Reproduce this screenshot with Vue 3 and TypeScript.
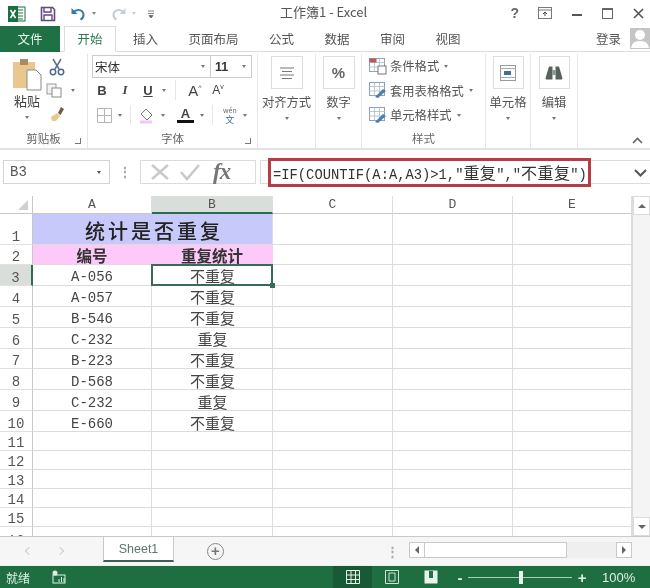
<template>
  <div class="app">
    <header class="title-bar">
      <div class="quick">
        <svg class="xl-logo" width="18" height="18" viewBox="0 0 18 18">
          <rect x="7" y="2" width="10" height="14" fill="#fff" stroke="#1d6f42" />
          <path d="M10 5h5M10 8h5M10 11h5M10 14h5" stroke="#1d6f42" />
          <rect x="0" y="1" width="10" height="16" fill="#1d6f42" />
          <path d="M2.5 5l5 8M7.5 5l-5 8" stroke="#fff" stroke-width="1.6" />
        </svg>
        <svg width="16" height="16" viewBox="0 0 16 16">
          <path d="M1.5 1.5h11l2 2v11h-13z" fill="#fff" stroke="#5f4a80" stroke-width="1.6" />
          <path d="M4 2v4h7V2M4 14V9h8v5" fill="none" stroke="#5f4a80" stroke-width="1.4" />
        </svg>
        <svg width="17" height="16" viewBox="0 0 17 16">
          <path d="M3 6.5c4-4 10-3 10.500 2 .2 2.500-1 4-3 5" fill="none" stroke="#3b78ab" stroke-width="2" />
          <path d="M1.500 2v6h6z" fill="#3b78ab" />
        </svg>
        <span class="tiny-arrow"></span>
        <svg width="17" height="16" viewBox="0 0 17 16">
          <path d="M14 6.500c-4-4-10-3-10.500 2-.2 2.500 1 4 3 5" fill="none" stroke="#c6cdd3" stroke-width="2" />
          <path d="M15.500 2v6h-6z" fill="#c6cdd3" />
        </svg>
        <span class="tiny-arrow faint"></span>
        <svg class="customize" width="8" height="8" viewBox="0 0 8 8">
          <path d="M1 1h6M1 3.500h6M2 5.500h4L4 8z" fill="#666" stroke="#666" stroke-width=".8" />
        </svg>
      </div>
      <div class="doc-title">工作簿1 - Excel</div>
      <div class="win-buttons">
        <span class="help">?</span>
        <svg width="14" height="12" viewBox="0 0 14 12">
          <rect x=".5" y=".5" width="13" height="11" fill="none" stroke="#777" />
          <path d="M.5 3h13" stroke="#777" />
          <path d="M7 9V5M5 7l2-2 2 2" fill="none" stroke="#444" />
        </svg>
        <span class="minimize"></span>
        <span class="maximize"></span>
        <svg width="11" height="11" viewBox="0 0 11 11">
          <path d="M1 1l9 9M10 1l-9 9" stroke="#555" stroke-width="1.6" />
        </svg>
      </div>
    </header>

    <nav class="tabs">
      <span class="file-tab">文件</span>
      <span v-for="tab in tabs" :key="tab" class="tab" :class="{ active: tab === '开始' }">{{ tab }}</span>
      <span class="login">登录</span>
      <span class="avatar">
        <svg width="20" height="20" viewBox="0 0 20 20">
          <circle cx="10" cy="7" r="5" fill="#fff" />
          <path d="M1 20c1-6 5-7 9-7s8 1 9 7z" fill="#fff" />
        </svg>
      </span>
    </nav>

    <section class="ribbon">
      <div class="group clipboard">
        <div class="group-body clip-body">
          <div class="paste">
            <svg width="30" height="34" viewBox="0 0 30 34">
              <rect x="1" y="4" width="22" height="26" fill="#e9c78e" />
              <rect x="8" y="1" width="8" height="6" fill="#a88c64" />
              <path d="M15 12h9l5 5v15H15z" fill="#fff" stroke="#8a8a8a" />
            </svg>
            <span>粘贴</span>
            <i class="arrow"></i>
          </div>
          <div class="clip-tools">
            <svg width="16" height="18" viewBox="0 0 16 18">
              <path d="M4 1l6 10M12 1L6 11" stroke="#5f6f85" stroke-width="1.5" />
              <circle cx="4" cy="14" r="2.700" fill="none" stroke="#4c6a90" stroke-width="1.500" />
              <circle cx="12" cy="14" r="2.700" fill="none" stroke="#4c6a90" stroke-width="1.500" />
            </svg>
            <span class="tool-line">
              <svg width="16" height="15" viewBox="0 0 16 15">
                <rect x="1" y="1" width="9" height="10" fill="#f2f2f2" stroke="#9a9a9a" />
                <rect x="6" y="5" width="9" height="9" fill="#fff" stroke="#8a8a8a" />
              </svg>
              <i class="arrow"></i>
            </span>
            <svg width="16" height="16" viewBox="0 0 16 16">
              <path d="M9 7l3-6 3 2-3.500 6z" fill="#6f5a42" />
              <path d="M2 11l6-4 3 3-4 5H3z" fill="#e7c98e" />
            </svg>
          </div>
        </div>
        <div class="group-label"><span>剪贴板</span><i class="launcher"></i></div>
      </div>

      <div class="group font-group">
        <div class="group-body font-body">
          <div class="combos">
            <span class="combo name">宋体<i class="arrow"></i></span>
            <span class="combo size">11<i class="arrow"></i></span>
          </div>
          <div class="font-row">
            <b class="glyph">B</b>
            <span class="glyph italic">I</span>
            <span class="glyph underline">U</span><i class="arrow"></i>
            <span class="sep"></span>
            <span class="glyph big">A<sup>^</sup></span>
            <span class="glyph small">A<sup>v</sup></span>
          </div>
          <div class="font-row second">
            <svg width="15" height="15" viewBox="0 0 15 15">
              <path d="M.5.5h14v14H.5zM7.500.5v14M.5 7.500h14" fill="none" stroke="#b5b5b5" />
            </svg>
            <i class="arrow"></i>
            <span class="sep"></span>
            <svg width="16" height="17" viewBox="0 0 16 17">
              <path d="M7 2l6 6-5 5-6-6z" fill="#fff" stroke="#777" />
              <path d="M1 15h12" stroke="#f0c8f4" stroke-width="3" />
            </svg>
            <i class="arrow"></i>
            <span class="color-a">A</span>
            <i class="arrow"></i>
            <span class="sep"></span>
            <span class="wen"><small>wén</small>文</span>
            <i class="arrow"></i>
          </div>
        </div>
        <div class="group-label"><span>字体</span><i class="launcher"></i></div>
      </div>

      <div class="group collapsed align-group">
        <span class="big-button">
          <svg width="14" height="12" viewBox="0 0 14 12">
            <path d="M0 1h14M2 4.500h10M0 8h14M2 11.500h10" stroke="#777" />
          </svg>
        </span>
        <span class="button-text">对齐方式</span>
        <i class="arrow"></i>
      </div>

      <div class="group collapsed number-group">
        <span class="big-button"><b class="percent">%</b></span>
        <span class="button-text">数字</span>
        <i class="arrow"></i>
      </div>

      <div class="group style-group">
        <div class="group-body style-body">
          <div v-for="(s, i) in styleItems" :key="s" class="style-item">
            <svg width="18" height="17" viewBox="0 0 18 17">
              <rect x=".5" y=".5" width="15" height="13" fill="#fff" stroke="#8da0b5" />
              <path d="M.5 4.500h15M.5 9h15M5.500.5v13M10.500.5v13" stroke="#b9c6d3" />
              <path v-if="i > 0" d="M6 15l8-8 3 2-8 7z" fill="#4a7fb0" />
              <rect v-else x="9" y="8" width="8" height="8" fill="#fff" stroke="#777" />
              <rect v-if="i === 0" x=".5" y=".5" width="7" height="4" fill="#b85a5a" />
            </svg>
            <span>{{ s }}</span><i class="arrow"></i>
          </div>
        </div>
        <div class="group-label center"><span>样式</span></div>
      </div>

      <div class="group collapsed cells-group">
        <span class="big-button">
          <svg width="16" height="16" viewBox="0 0 16 16">
            <rect x=".5" y=".5" width="15" height="15" fill="#fff" stroke="#999" />
            <path d="M.5 3.500h15M.5 12.500h15" stroke="#aaa" />
            <rect x="4" y="6" width="7" height="4" fill="#456f96" />
          </svg>
        </span>
        <span class="button-text">单元格</span>
        <i class="arrow"></i>
      </div>

      <div class="group collapsed edit-group">
        <span class="big-button">
          <svg width="18" height="14" viewBox="0 0 18 14">
            <path d="M4 .5h3.500v13H1.500c-.8 0-1.100-.7-.9-1.500zM10.500.5H14l3.400 11.500c.2.800-.1 1.500-.9 1.500h-6z" fill="#55635a" />
            <path d="M7.500 4h3v5h-3z" fill="#8a958e" />
          </svg>
        </span>
        <span class="button-text">编辑</span>
        <i class="arrow"></i>
      </div>

      <svg class="collapse" width="11" height="7" viewBox="0 0 11 7">
        <path d="M1 6l4.500-4.500L10 6" fill="none" stroke="#666" stroke-width="1.600" />
      </svg>
    </section>

    <section class="formula-bar">
      <div class="name-box">B3<i class="arrow dark"></i></div>
      <span class="dots">⋮</span>
      <div class="fx-box">
        <svg width="22" height="20" viewBox="0 0 22 20">
          <path d="M3 3l16 14M19 3L3 17" stroke="#c9c9c9" stroke-width="2.400" />
        </svg>
        <svg width="22" height="20" viewBox="0 0 22 20">
          <path d="M2 10l6 7L20 3" fill="none" stroke="#c9c9c9" stroke-width="2.600" />
        </svg>
        <span class="fx">fx</span>
      </div>
      <div class="formula-input">
        <div class="formula-text">=IF(COUNTIF(A:A,A3)&gt;1,"<span class="cjk">重复</span>","<span class="cjk">不重复</span>")</div>
        <svg class="expand" width="13" height="8" viewBox="0 0 13 8">
          <path d="M1 1l5.500 5.500L12 1" fill="none" stroke="#555" stroke-width="2" />
        </svg>
      </div>
    </section>

    <section class="sheet-area">
      <div class="sheet">
        <div class="corner"><i></i></div>
        <div v-for="c in columns" :key="c" class="col-head" :class="{ current: c === 'B' }">{{ c }}</div>

        <template v-for="row in rows" :key="row.n">
          <div
            class="row-head"
            :class="{ current: row.n === 3, partial: row.n === 16 }"
            :style="{ height: row.h + 'px' }"
          >
            {{ row.n }}
          </div>
          <div v-if="row.n === 1" class="cell title-cell">统计是否重复</div>
          <template v-else>
            <div class="cell" :class="row.n === 2 ? 'head-cell' : 'id-cell'">{{ row.a }}</div>
            <div class="cell" :class="{ 'head-cell': row.n === 2, 'status-cell': row.n > 2, selected: row.n === 3 }">
              {{ row.b }}
            </div>
          </template>
          <div v-for="c in 3" :key="c" class="cell"></div>
        </template>
      </div>

      <aside class="v-scroll">
        <span class="v-btn"><i class="up"></i></span>
        <span class="v-track"></span>
        <span class="v-btn"><i class="down"></i></span>
      </aside>
    </section>

    <section class="tab-bar">
      <div class="nav-arrows"><i class="nav left"></i><i class="nav right"></i></div>
      <div class="sheet-tab">Sheet1</div>
      <span class="add-sheet">+</span>
      <span class="dots tab-dots">⋮</span>
      <div class="h-scroll">
        <span class="h-btn"><i class="tri-left"></i></span>
        <span class="h-thumb"></span>
        <span class="h-track"></span>
        <span class="h-btn"><i class="tri-right"></i></span>
      </div>
    </section>

    <footer class="status-bar">
      <span class="ready">就绪</span>
      <svg class="macro" width="14" height="14" viewBox="0 0 14 14">
        <circle cx="3" cy="3" r="2.500" fill="#dff0e5" />
        <rect x="1" y="5" width="12" height="8" fill="none" stroke="#dff0e5" />
        <path d="M7 12V9M9.500 12V7M12 12V8" stroke="#dff0e5" />
      </svg>
      <div class="views">
        <span class="view active">
          <svg width="14" height="14" viewBox="0 0 14 14">
            <path d="M.5.5h13v13H.5zM.5 5h13M.5 9.500h13M5 .5v13M9.500.5v13" fill="none" stroke="#e8f3ec" />
          </svg>
        </span>
        <span class="view">
          <svg width="14" height="14" viewBox="0 0 14 14">
            <path d="M.5.5h13v13H.5z" fill="none" stroke="#cfe3d6" />
            <path d="M4 3h6v8H4z" fill="none" stroke="#cfe3d6" />
          </svg>
        </span>
        <span class="view">
          <svg width="14" height="14" viewBox="0 0 14 14">
            <path d="M.5.5h13v13H.5z" fill="#e8f3ec" />
            <path d="M5 1v7h4V1" fill="#217346" />
          </svg>
        </span>
      </div>
      <div class="zoom">
        <span class="zoom-sign">-</span>
        <span class="zoom-track"><i></i></span>
        <span class="zoom-sign plus">+</span>
        <span class="zoom-value">100%</span>
      </div>
    </footer>
  </div>
</template>

<script setup lang="ts">
interface Row {
  n: number
  h: number
  a: string
  b: string
}

const tabs = ['开始', '插入', '页面布局', '公式', '数据', '审阅', '视图']
const columns = ['A', 'B', 'C', 'D', 'E']
const styleItems = ['条件格式', '套用表格格式', '单元格样式']

const data: [string, string][] = [
  ['', ''],
  ['编号', '重复统计'],
  ['A-056', '不重复'],
  ['A-057', '不重复'],
  ['B-546', '不重复'],
  ['C-232', '重复'],
  ['B-223', '不重复'],
  ['D-568', '不重复'],
  ['C-232', '重复'],
  ['E-660', '不重复'],
]

function rowHeight(n: number): number {
  if (n === 1) return 31
  if (n === 2) return 20
  if (n <= 10) return 20.9
  return n === 16 ? 11 : 19
}

const rows: Row[] = Array.from({ length: 16 }, (_, i) => ({
  n: i + 1,
  h: rowHeight(i + 1),
  a: data[i]?.[0] ?? '',
  b: data[i]?.[1] ?? '',
}))
</script>

<style>
html,
body {
  margin: 0;
  background: #fff;
}
</style>

<style scoped>
.app {
  width: 650px;
  height: 588px;
  overflow: hidden;
  display: flex;
  flex-direction: column;
  font-family: 'Noto Sans CJK SC', 'Liberation Sans', sans-serif;
  color: #444;
  background: #fff;
  filter: blur(0.45px);
}

i {
  display: block;
}

.arrow {
  width: 0;
  height: 0;
  border: 2.5px solid transparent;
  border-top: 3px solid #777;
  border-bottom: 0;
  flex: none;
}

.arrow.dark {
  border-top-color: #555;
}

.tiny-arrow {
  width: 0;
  height: 0;
  border: 2px solid transparent;
  border-top: 3px solid #888;
  border-bottom: 0;
  margin-left: -9px;
}

.tiny-arrow.faint {
  border-top-color: #ccc;
}

/* title bar */
.title-bar {
  height: 26px;
  flex: none;
  display: flex;
  align-items: center;
  position: relative;
}

.quick {
  display: flex;
  align-items: center;
  gap: 14px;
  padding: 1px 0 0 8px;
}

.customize {
  margin-left: -3px;
}

.doc-title {
  position: absolute;
  left: 280px;
  top: 3px;
  font-size: 13px;
  line-height: 18px;
  color: #555;
}

.win-buttons {
  margin-left: auto;
  display: flex;
  align-items: center;
  gap: 20px;
  padding-right: 6px;
}

.help {
  font: bold 14px 'Liberation Sans', sans-serif;
  color: #666;
  margin-right: -1px;
}

.minimize {
  width: 10px;
  height: 2px;
  background: #555;
  margin-top: 3px;
}

.maximize {
  width: 9px;
  height: 8px;
  border: 1px solid #666;
  border-top-width: 2px;
}

/* tabs */
.tabs {
  height: 26px;
  flex: none;
  display: flex;
  align-items: center;
  position: relative;
  border-bottom: 1px solid #dcdcdc;
  box-sizing: border-box;
  font-size: 12.5px;
  color: #555;
}

.file-tab {
  width: 60px;
  height: 26px;
  background: #1f7145;
  color: #e8f3ec;
  display: flex;
  align-items: center;
  justify-content: center;
  flex: none;
}

.tab {
  margin-left: 30.5px;
  white-space: nowrap;
}

.tab.active {
  width: 52px;
  height: 26px;
  margin-left: 4px;
  margin-right: -13.500px;
  box-sizing: border-box;
  border: 1px solid #dcdcdc;
  border-bottom: 1px solid #fff;
  display: flex;
  align-items: center;
  justify-content: center;
  color: #2d7a50;
}

.login {
  margin-left: auto;
  margin-right: 9px;
}

.avatar {
  width: 20px;
  height: 21px;
  background: #c5c5c5;
  overflow: hidden;
  flex: none;
}

/* ribbon */
.ribbon {
  height: 98px;
  flex: none;
  display: flex;
  position: relative;
  border-bottom: 2px solid #e3e3e3;
  box-sizing: border-box;
  background: #fff;
  font-size: 12.300px;
  color: #555;
}

.group {
  box-sizing: border-box;
  border-right: 1px solid #e6e6e6;
  height: 94px;
  margin-top: 2px;
  display: flex;
  flex-direction: column;
  flex: none;
}

.group-body {
  flex: 1;
  min-height: 0;
}

.group-label {
  height: 20px;
  display: flex;
  align-items: center;
  justify-content: center;
  position: relative;
  font-size: 11.5px;
  color: #666;
}

.launcher {
  position: absolute;
  right: 6px;
  bottom: 4px;
  width: 5px;
  height: 5px;
  border-right: 1px solid #777;
  border-bottom: 1px solid #777;
}

.clipboard {
  width: 88px;
}

.clip-body {
  display: flex;
  padding: 4px 0 0 10px;
}

.paste {
  width: 34px;
  display: flex;
  flex-direction: column;
  align-items: center;
  font-size: 13px;
  color: #444;
  line-height: 18px;
}

.paste .arrow {
  margin-top: 6px;
}

.clip-tools {
  display: flex;
  flex-direction: column;
  gap: 7px;
  padding: 0 0 0 5px;
}

.tool-line {
  display: flex;
  align-items: center;
  gap: 9px;
  margin-left: -3px;
}

.clip-tools > svg:last-child {
  margin-top: 1px;
}

.font-group {
  width: 170px;
}

.font-body {
  padding: 1px 5px 0 4px;
  display: flex;
  flex-direction: column;
}

.combos {
  display: flex;
  height: 23px;
}

.combo {
  box-sizing: border-box;
  height: 23px;
  border: 1px solid #ccc;
  display: flex;
  align-items: center;
  justify-content: space-between;
  padding: 0 5px 0 2px;
  font-size: 12.5px;
  color: #333;
}

.combo.name {
  width: 119px;
}

.combo.size {
  width: 41px;
  border-left-width: 0;
  padding-left: 4px;
  font: bold 12.5px 'Liberation Sans', sans-serif;
}

.font-row {
  display: flex;
  align-items: center;
  height: 24px;
  padding-left: 2px;
  gap: 7px;
}

.font-row .sep {
  margin: 0 2px;
}

.font-row.second {
  margin-top: 1px;
  padding-left: 5px;
  gap: 6px;
}

.sep {
  width: 1px;
  height: 20px;
  background: #e6e6e6;
}

.glyph {
  font: 13px 'Liberation Serif', serif;
  color: #444;
  width: 16px;
  text-align: center;
}

b.glyph {
  font: bold 13px 'Liberation Sans', sans-serif;
}

.glyph.italic {
  font-style: italic;
  font-weight: 700;
}

.glyph.underline {
  font: bold 13px 'Liberation Sans', sans-serif;
  text-decoration: underline;
  margin-right: -1px;
}

.glyph.big {
  font: 15px 'Liberation Sans', sans-serif;
  margin-left: 2px;
}

.glyph.small {
  font: 12px 'Liberation Sans', sans-serif;
}

.glyph sup {
  font-size: 7px;
  line-height: 0;
}

.color-a {
  font: bold 13px/13px 'Liberation Sans', sans-serif;
  border-bottom: 3px solid #111;
  width: 17px;
  text-align: center;
  color: #444;
  margin-left: 6px;
}

.wen {
  display: flex;
  flex-direction: column;
  align-items: center;
  font-size: 9px;
  line-height: 9px;
  color: #3d6c96;
  margin-left: 2px;
}

.wen small {
  font-size: 7px;
  color: #666;
}

.collapsed {
  align-items: center;
  padding-top: 2px;
}

.big-button {
  box-sizing: border-box;
  height: 33px;
  flex: none;
  border: 1px solid #dedede;
  display: flex;
  align-items: center;
  justify-content: center;
}

.button-text {
  margin-top: 4px;
  line-height: 18px;
  white-space: nowrap;
  color: #555;
}

.collapsed .arrow {
  margin-top: 6px;
}

.align-group {
  width: 58px;
}

.align-group .big-button {
  width: 32px;
}

.number-group {
  width: 46px;
}

.number-group .big-button {
  width: 32px;
}

.percent {
  font: bold 15px 'Liberation Sans', sans-serif;
  color: #666;
}

.style-group {
  width: 124px;
}

.style-body {
  padding: 0 0 0 7px;
}

.style-item {
  display: flex;
  align-items: center;
  height: 24.5px;
  gap: 3px;
  white-space: nowrap;
}

.style-item .arrow {
  margin-left: 2px;
}

.cells-group {
  width: 45px;
}

.edit-group {
  width: 47px;
}

.cells-group .big-button,
.edit-group .big-button {
  width: 31px;
}

.collapse {
  position: absolute;
  left: 632px;
  top: 85px;
}

/* formula bar */
.formula-bar {
  height: 46px;
  flex: none;
  display: flex;
  align-items: center;
  box-sizing: border-box;
  padding: 10px 0 12px 3px;
  background: #fff;
}

.name-box {
  width: 107px;
  height: 24px;
  box-sizing: border-box;
  border: 1px solid #d4d4d4;
  display: flex;
  align-items: center;
  justify-content: space-between;
  padding: 0 8px 0 6px;
  font: 14px 'Liberation Mono', monospace;
  color: #555;
}

.dots {
  width: 30px;
  text-align: center;
  font: bold 14px 'Liberation Sans', sans-serif;
  color: #aaa;
}

.fx-box {
  width: 116px;
  height: 24px;
  box-sizing: border-box;
  border: 1px solid #dcdcdc;
  display: flex;
  align-items: center;
  padding-left: 8px;
  gap: 8px;
}

.fx {
  font: italic bold 23px/22px 'Liberation Serif', serif;
  color: #777;
  margin-left: 4px;
  letter-spacing: -1px;
}

.formula-input {
  flex: 1;
  height: 24px;
  margin-left: 4px;
  border: 1px solid #dcdcdc;
  border-right: 0;
  box-sizing: border-box;
  display: flex;
  align-items: center;
  position: relative;
}

.formula-text {
  position: absolute;
  left: 7px;
  top: -3px;
  width: 323px;
  height: 29px;
  box-sizing: border-box;
  border: 3px solid #b93b45;
  padding-left: 2px;
  font: 13.800px/23px 'Liberation Mono', monospace;
  color: #333;
  white-space: nowrap;
  background: #fff;
}

.cjk {
  font-family: 'Noto Sans CJK SC', sans-serif;
  font-size: 16px;
  letter-spacing: 0.4px;
}

.expand {
  position: absolute;
  right: 3px;
  top: 8px;
}

/* grid */
.sheet-area {
  flex: 1;
  min-height: 0;
  display: flex;
  overflow: hidden;
  border-bottom: 1px solid #c9c9c9;
}

.sheet {
  width: 632px;
  flex: none;
  display: grid;
  grid-template-columns: 33px 119px 121px 120px 120px 119px;
  grid-auto-rows: min-content;
  align-content: start;
  font-size: 15px;
  color: #333;
}

.corner {
  height: 18px;
  box-sizing: border-box;
  display: flex;
  justify-content: flex-end;
  align-items: flex-end;
  padding: 0 4px 3px 0;
  border-right: 1px solid #c8c8c8;
  border-bottom: 1px solid #c8c8c8;
}

.corner i {
  width: 0;
  height: 0;
  border: 5px solid transparent;
  border-right-color: #d0d0d0;
  border-bottom-color: #d0d0d0;
}

.col-head {
  height: 18px;
  box-sizing: border-box;
  border-right: 1px solid #dcdcdc;
  border-bottom: 1px solid #c8c8c8;
  font: 13px/18px 'Liberation Mono', monospace;
  text-align: center;
  color: #555;
}

.col-head.current {
  background: #d9dedb;
  border-bottom: 2px solid #2f6a52;
}

.row-head {
  box-sizing: border-box;
  border-right: 1px solid #c8c8c8;
  border-bottom: 1px solid #e0e0e0;
  font: 14px/1 'Liberation Mono', monospace;
  display: flex;
  align-items: flex-end;
  justify-content: center;
  overflow: hidden;
  color: #555;
}

.row-head.partial {
  align-items: flex-start;
  padding-top: 7px;
}

.row-head.current {
  background: #d9dedb;
  border-right: 2px solid #2f6a52;
}

.cell {
  box-sizing: border-box;
  border-right: 1px solid #dcdcdc;
  border-bottom: 1px solid #dcdcdc;
  display: flex;
  align-items: center;
  justify-content: center;
  min-width: 0;
  min-height: 0;
  position: relative;
  white-space: nowrap;
  line-height: 1;
  padding-top: 2px;
}

.title-cell {
  grid-column: span 2;
  background: #c7c9fb;
  font-size: 20px;
  font-weight: 500;
  letter-spacing: 3px;
  color: #222;
  padding: 3px 0 0 3px;
}

.head-cell {
  background: #fcc9f9;
  font-size: 15.500px;
  font-weight: 700;
  color: #333;
  border-right-color: #fcc9f9;
}

.id-cell {
  font: 14px/14px 'Liberation Mono', monospace;
  color: #444;
  padding-top: 5px;
}

.status-cell {
  color: #444;
  padding-left: 1px;
}

.selected::after {
  content: '';
  position: absolute;
  inset: -1px -1px -1px -1px;
  border: 2px solid #3a6a58;
}

.selected::before {
  content: '';
  position: absolute;
  right: -3px;
  bottom: -3px;
  width: 5px;
  height: 5px;
  background: #3a6a58;
  z-index: 1;
}

.v-scroll {
  flex: 1;
  display: flex;
  flex-direction: column;
  border-left: 1px solid #dcdcdc;
  background: #f4f4f4;
}

.v-btn {
  height: 17px;
  background: #fff;
  border: 1px solid #dcdcdc;
  display: flex;
  align-items: center;
  justify-content: center;
  flex: none;
}

.v-track {
  flex: 1;
}

.up,
.down {
  width: 0;
  height: 0;
  border: 4px solid transparent;
}

.up {
  border-top: 0;
  border-bottom: 4px solid #666;
}

.down {
  border-bottom: 0;
  border-top: 4px solid #666;
}

/* sheet tabs */
.tab-bar {
  height: 28px;
  flex: none;
  display: flex;
  align-items: center;
  position: relative;
  background: #f6f6f6;
  font-family: 'Liberation Sans', sans-serif;
}

.nav-arrows {
  width: 103px;
  flex: none;
  display: flex;
  gap: 25px;
  padding-left: 26px;
  box-sizing: border-box;
}

.nav {
  width: 5px;
  height: 5px;
  border-left: 1.500px solid #ccc;
  border-bottom: 1.500px solid #ccc;
}

.nav.left {
  transform: rotate(45deg);
}

.nav.right {
  transform: rotate(225deg);
}

.sheet-tab {
  width: 71px;
  height: 25px;
  margin-top: -3px;
  box-sizing: border-box;
  background: #fff;
  border: 1px solid #c9c9c9;
  border-top: 0;
  border-bottom: 2px solid #3f5f50;
  text-align: center;
  font-size: 12.500px;
  line-height: 24px;
  color: #5f7570;
  flex: none;
}

.add-sheet {
  box-sizing: border-box;
  width: 17px;
  height: 17px;
  margin-left: 33px;
  border: 1.500px solid #888;
  border-radius: 50%;
  font: bold 15px/13px 'Liberation Sans', sans-serif;
  text-align: center;
  color: #777;
}

.tab-dots {
  margin-left: 160px;
  font-size: 13px;
  width: 16px;
}

.h-scroll {
  margin-top: -2px;
  width: 223px;
  height: 16px;
  display: flex;
  flex: none;
  margin-left: 9px;
  background: #efefef;
}

.h-btn {
  width: 16px;
  box-sizing: border-box;
  background: #fff;
  border: 1px solid #c9c9c9;
  display: flex;
  align-items: center;
  justify-content: center;
  flex: none;
}

.h-thumb {
  width: 142px;
  box-sizing: border-box;
  background: #fff;
  border: 1px solid #c9c9c9;
  border-left: 0;
  flex: none;
}

.h-track {
  flex: 1;
}

.tri-left,
.tri-right {
  width: 0;
  height: 0;
  border: 4px solid transparent;
}

.tri-left {
  border-left: 0;
  border-right: 4px solid #666;
}

.tri-right {
  border-right: 0;
  border-left: 4px solid #666;
}

/* status bar */
.status-bar {
  height: 23px;
  flex: none;
  box-sizing: border-box;
  background: #1f6e42;
  color: #dff0e5;
  display: flex;
  align-items: center;
  font-size: 12px;
  padding-left: 6px;
  border-top: 1px solid #e8f3ec;
}

.macro {
  margin-left: 22px;
}

.views {
  margin-left: 267px;
  display: flex;
  align-self: stretch;
}

.view {
  width: 39px;
  display: flex;
  align-items: center;
  justify-content: center;
}

.view.active {
  background: #175a35;
}

.zoom {
  margin-left: 5px;
  display: flex;
  align-items: center;
  gap: 3px;
  font-family: 'Liberation Sans', sans-serif;
}

.zoom-sign {
  font-size: 15px;
  font-weight: 700;
  width: 10px;
  text-align: center;
}

.zoom-sign.plus {
  margin-left: 2px;
}

.zoom-track {
  width: 104px;
  height: 1px;
  background: #a8d0b8;
  position: relative;
}

.zoom-track i {
  position: absolute;
  left: 51px;
  top: -6px;
  width: 4px;
  height: 13px;
  background: #e8f3ec;
}

.zoom-value {
  margin-left: 12px;
  font-size: 13px;
}
</style>
